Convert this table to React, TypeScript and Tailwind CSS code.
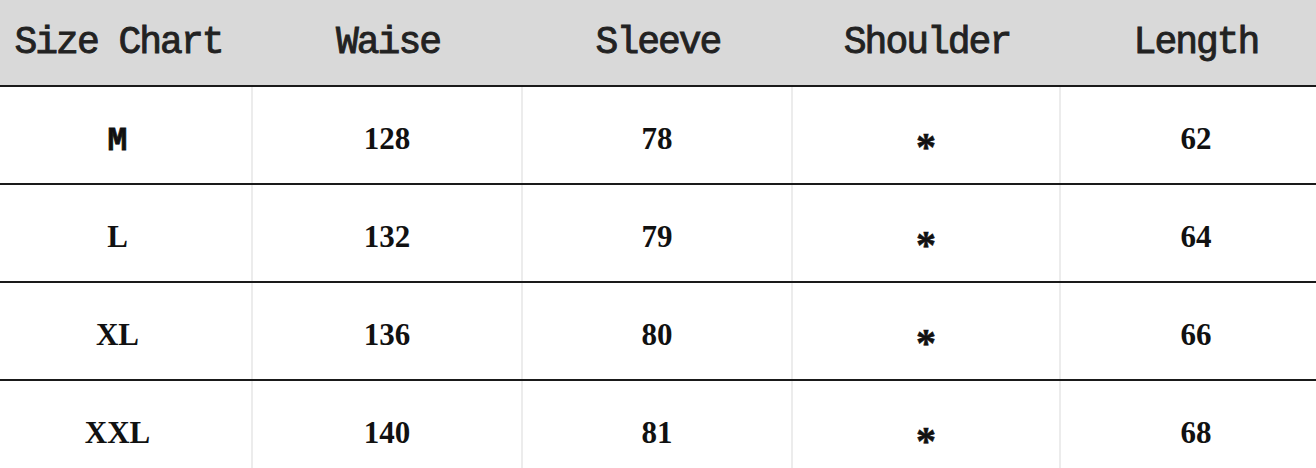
import React from "react";

const cols = ["w-[269px]", "w-[270px]", "w-[270px]", "w-[268px]", "w-[270px]"];
const headers = ["Size Chart", "Waise", "Sleeve", "Shoulder", "Length"];
const rows = [
  ["M", "128", "78", "*", "62"],
  ["L", "132", "79", "*", "64"],
  ["XL", "136", "80", "*", "66"],
  ["XXL", "140", "81", "*", "68"],
];

function Cell({ value, ci }: { value: string; ci: number }) {
  const border = ci < 4 ? "border-r-2 border-[#ececec]" : "";
  let content: React.ReactNode = value;
  if (value === "M") {
    content = (
      <span className="inline-block translate-y-[3px] font-['Liberation_Mono',monospace] text-[33px] font-bold [-webkit-text-stroke:0.8px_#111]">
        M
      </span>
    );
  } else if (value === "*") {
    content = (
      <span className="inline-block translate-y-[9px] text-[40px] [-webkit-text-stroke:0.6px_#111]">*</span>
    );
  }
  return (
    <div
      className={`${cols[ci]} ${border} shrink-0 flex items-center justify-center pt-[6px] font-['Liberation_Serif',serif] text-[31px] font-bold leading-none text-[#111]`}
    >
      {content}
    </div>
  );
}

export default function App() {
  return (
    <div className="w-[1316px] h-[468px] overflow-hidden bg-white">
      <div className="-ml-[16px] w-[1347px]">
        <div className="flex h-[87px] bg-[#d9d9d9] border-b-2 border-[#1a1a1a]">
          {headers.map((h, i) => (
            <div
              key={h}
              className={`${cols[i]} shrink-0 flex items-center justify-center font-['Liberation_Mono',monospace] text-[38px] font-normal tracking-[-2px] leading-none text-[#222] [-webkit-text-stroke:0.9px_#222]`}
            >
              {h}
            </div>
          ))}
        </div>
        {rows.map((r, ri) => (
          <div key={ri} className="flex h-[98px] border-b-2 border-[#1a1a1a]">
            {r.map((v, ci) => (
              <Cell key={ci} value={v} ci={ci} />
            ))}
          </div>
        ))}
      </div>
    </div>
  );
}
